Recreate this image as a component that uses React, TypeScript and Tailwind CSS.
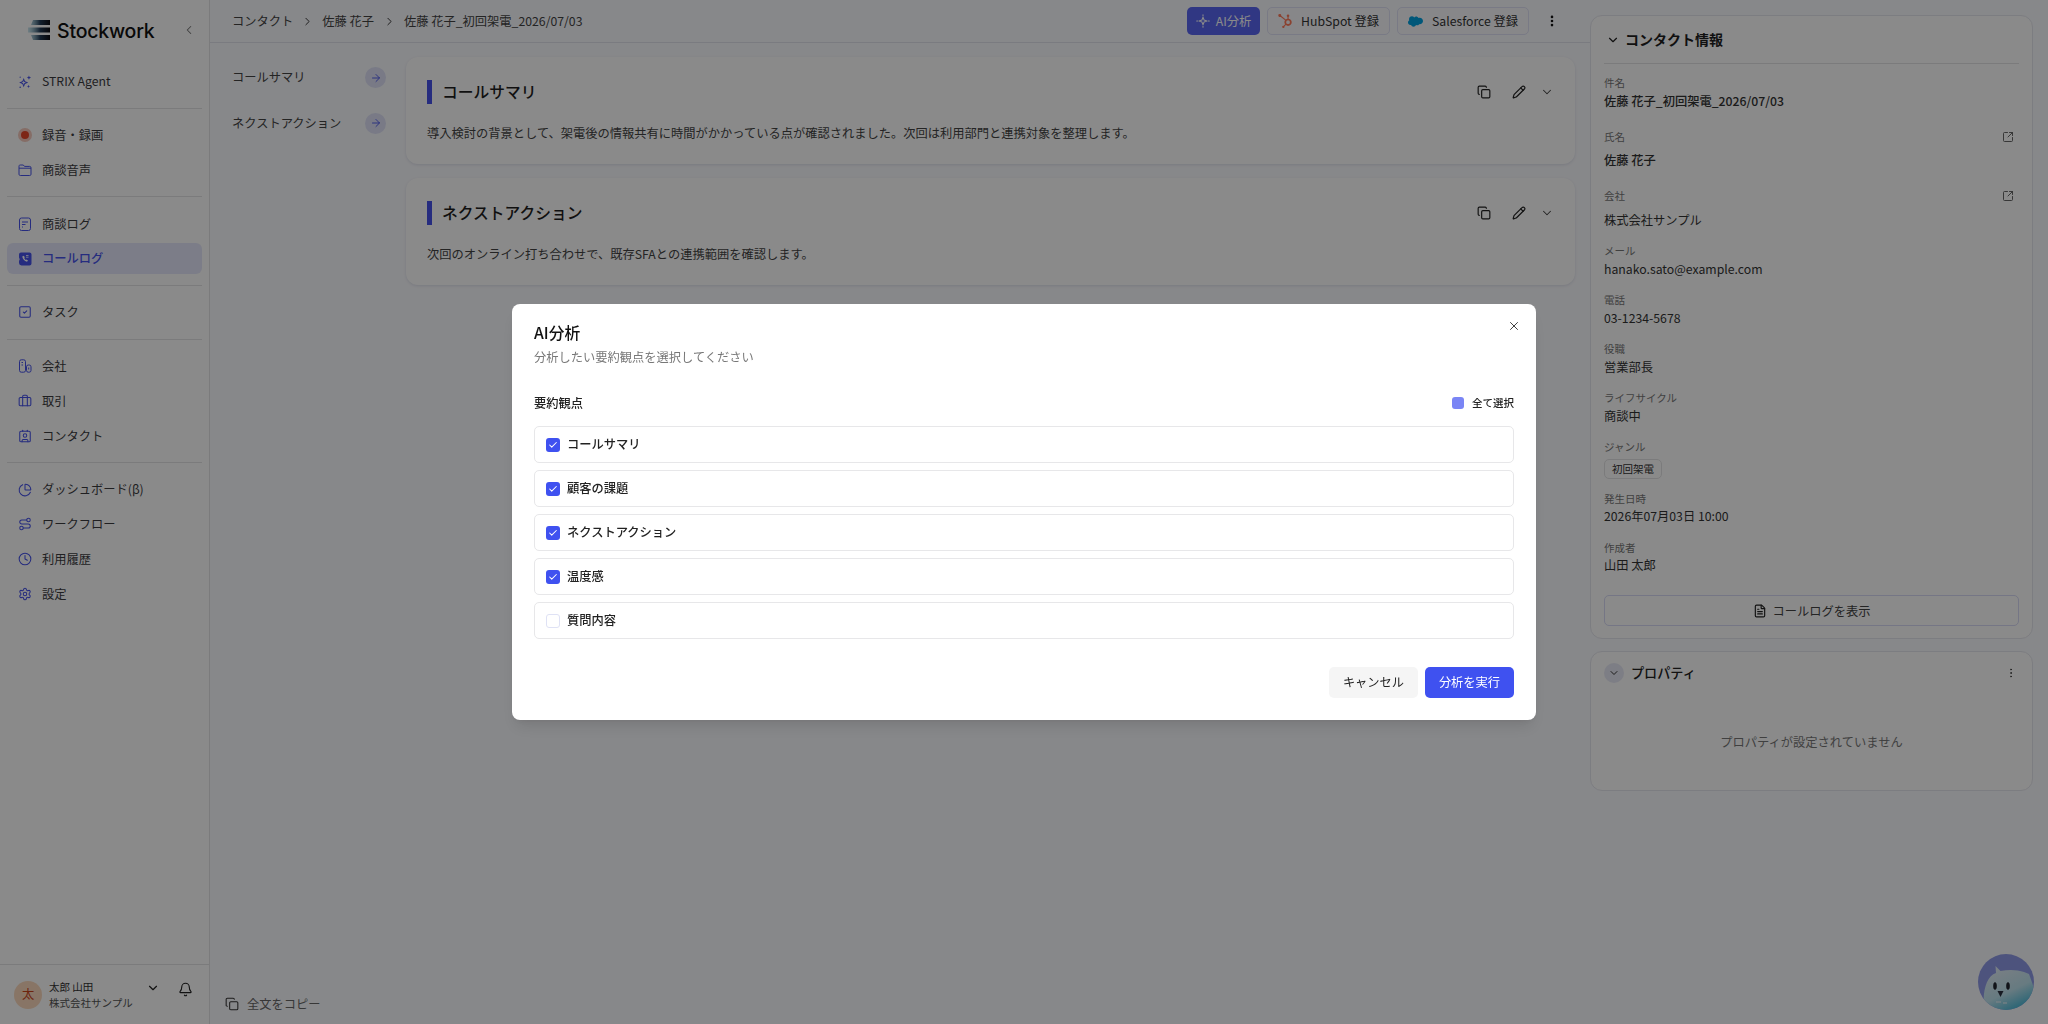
import type { ReactNode } from 'react'
import clsx from 'clsx'
import {
  ArrowRight, Bell, Briefcase, ChartPie, Check, ChevronDown, ChevronLeft, ChevronRight, Clock,
  Contact, Copy, EllipsisVertical, FileText, Pencil, Route, Settings, SquareArrowOutUpRight, SquareCheck, X,
} from 'lucide-react'
import { SiHubspot, SiSalesforce } from 'react-icons/si'

const fontCls = "font-['Noto_Sans_CJK_JP','Noto_Sans',sans-serif]"
const dividerCls = 'h-px bg-[#e4e4e6]'

function AgentStars({ className }: { className?: string }) {
  return (
    <svg viewBox="0 0 16 16" className={className} fill="currentColor">
      <path d="M6.500 3.500 8 7.200l3.700 1.500L8 10.200l-1.500 3.700L5 10.200 1.300 8.700 5 7.200zM6.500 6.200l-.6 1.900-1.900.6 1.900.6.6 1.900.6-1.900 1.900-.6-1.900-.6z" fillRule="evenodd" />
      <path d="M12.500.5l.7 1.800 1.800.7-1.800.7-.7 1.800-.7-1.800-1.800-.7 1.800-.7z" />
      <path d="M12 11l.5 1.500 1.500.5-1.500.5-.5 1.500-.5-1.500-1.500-.5 1.500-.5z" />
      <circle cx="2.500" cy="14" r=".9" />
      <circle cx="2.500" cy="2.500" r=".7" />
    </svg>
  )
}

function AiStar({ className }: { className?: string }) {
  return (
    <svg viewBox="0 0 16 16" className={className} fill="none" stroke="currentColor" strokeWidth="1.200" strokeLinejoin="round">
      <path d="M8 3.500 9.200 6.800 12.500 8 9.200 9.200 8 12.500 6.800 9.200 3.500 8 6.800 6.800z" />
      <path d="M8 .8v1.200M8 14v1.200M.8 8H2M14 8h1.200" strokeLinecap="round" />
    </svg>
  )
}

function RecDot() {
  return (
    <span className="flex h-[14px] w-[14px] items-center justify-center rounded-full bg-[#f6c9bd]">
      <span className="h-[8px] w-[8px] rounded-full bg-[#e8482a]" />
    </span>
  )
}

function FolderIcon() {
  return (
    <svg viewBox="0 0 14 14" className="h-[14px] w-[14px]" fill="none" stroke="currentColor" strokeWidth="1">
      <path d="M1 3.200C1 2.300 1.600 2 2.300 2h3l1.200 1.400h5.200c.8 0 1.300.5 1.300 1.300v6.600c0 .8-.5 1.200-1.300 1.200H2.300C1.500 12.500 1 12 1 11.300z" />
      <path d="M1 5.200h12" />
    </svg>
  )
}

function LogIcon() {
  return (
    <svg viewBox="0 0 14 14" className="h-[14px] w-[14px]" fill="none" stroke="currentColor" strokeWidth="1">
      <rect x="1.500" y="1" width="11" height="12.500" rx="2" />
      <path d="M4 5h6M4 7.500h3.500M4 10h1" />
    </svg>
  )
}

function CallLogIcon() {
  return (
    <svg viewBox="0 0 14 14" className="h-[14px] w-[14px]" fill="currentColor">
      <path d="M3 .6h8.500a2 2 0 0 1 2 2v8.800a2 2 0 0 1-2 2H3.500A2.500 2.500 0 0 1 1 11V9l.7-1.800L1 5.500V2.600a2 2 0 0 1 2-2z" />
      <path d="M4.200 4.500c.6 2.700 2 4.300 4.800 5.200l1-1.300-1.600-1-.7.500c-.7-.4-1.200-1-1.500-1.800l.6-.6-.9-1.800z" fill="#fff" />
      <path d="M8 3.500h2.500M8 5.200h2.500" stroke="#fff" strokeWidth=".8" />
    </svg>
  )
}

function CompanyIcon() {
  return (
    <svg viewBox="0 0 14 14" className="h-[14px] w-[14px]" fill="none" stroke="currentColor" strokeWidth="1">
      <rect x="1.500" y=".8" width="6" height="12.400" rx="1.800" />
      <rect x="8.500" y="6" width="4.500" height="7.200" rx="1.800" />
      <path d="M3.500 3.500h1.500M3.500 6h1.500M10.700 8.500v2" />
    </svg>
  )
}

type NavEntry = { label: string; icon: ReactNode; active?: boolean }

const navIcon = 'h-[14px] w-[14px]'
const navGroups: NavEntry[][] = [
  [{ label: 'STRIX Agent', icon: <AgentStars className={navIcon} /> }],
  [
    { label: '録音・録画', icon: <RecDot /> },
    { label: '商談音声', icon: <FolderIcon /> },
  ],
  [
    { label: '商談ログ', icon: <LogIcon /> },
    { label: 'コールログ', icon: <CallLogIcon />, active: true },
  ],
  [{ label: 'タスク', icon: <SquareCheck className={navIcon} strokeWidth={1.800} /> }],
  [
    { label: '会社', icon: <CompanyIcon /> },
    { label: '取引', icon: <Briefcase className={navIcon} strokeWidth={1.800} /> },
    { label: 'コンタクト', icon: <Contact className={navIcon} strokeWidth={1.800} /> },
  ],
  [
    { label: 'ダッシュボード(β)', icon: <ChartPie className={navIcon} strokeWidth={1.800} /> },
    { label: 'ワークフロー', icon: <Route className={navIcon} strokeWidth={1.800} /> },
    { label: '利用履歴', icon: <Clock className={navIcon} strokeWidth={1.800} /> },
    { label: '設定', icon: <Settings className={navIcon} strokeWidth={1.800} /> },
  ],
]

function Sidebar() {
  return (
    <aside className="flex h-full w-[210px] shrink-0 flex-col border-r border-[#e4e4e6] bg-white">
      <div className="flex h-[66px] shrink-0 items-start pl-[27px] pr-[13px] pt-[19px]">
        <svg viewBox="0 0 24 22" className="h-[22px] w-[24px]">
          <defs>
            <linearGradient id="logo-bars" x1="0" x2="1">
              <stop offset="0" stopColor="#7fc4d8" stopOpacity=".4" />
              <stop offset=".55" stopColor="#223a55" />
              <stop offset="1" stopColor="#0d0d12" />
            </linearGradient>
          </defs>
          <path d="M6 1h17v5H4z M1 8.500h22v5H1z M4 16h19v5H6z" fill="url(#logo-bars)" />
        </svg>
        <span className="ml-[6px] font-['Inter',sans-serif] text-[19.500px] font-medium leading-[24px] tracking-[-0.2px] text-[#111]">Stockwork</span>
        <ChevronLeft className="ml-auto mt-[4px] h-[14px] w-[14px] text-[#777]" strokeWidth={1.800} />
      </div>

      <nav>
        {navGroups.map((group, i) => (
          <div key={i}>
            {i > 0 && <div className={clsx(dividerCls, 'mx-[7px] my-[10.900px] w-[195px]')} />}
            <div className="flex flex-col gap-[3.800px]">
              {group.map((item) => (
                <div
                  key={item.label}
                  className={clsx(
                    'mx-[7px] flex h-[31px] w-[195px] items-center gap-[10px] rounded-[6px] pl-[11px] text-[12.250px]',
                    item.active ? 'bg-[#e6e8fb] font-medium text-[#4652ea]' : 'text-[#3c3c3f]',
                  )}
                >
                  <span className="flex h-[14px] w-[14px] items-center justify-center text-[#4652ea]">{item.icon}</span>
                  {item.label}
                </div>
              ))}
            </div>
          </div>
        ))}
      </nav>

      <div className="mt-auto flex h-[60px] shrink-0 items-center border-t border-[#e4e4e6] pl-[14px]">
        <span className="flex h-[28px] w-[28px] items-center justify-center rounded-full bg-[#fbd9bd] text-[12.250px] text-[#c9441a]">太</span>
        <div className="ml-[7px] w-[90px]">
          <div className="text-[10.500px] leading-[16px] text-[#333]">太郎 山田</div>
          <div className="whitespace-nowrap text-[10.500px] leading-[16px] text-[#555]">株式会社サンプル</div>
        </div>
        <ChevronDown className="mb-[14px] ml-[7px] h-[14px] w-[14px] text-[#222]" strokeWidth={2} />
        <Bell className="mb-[10px] ml-[18px] h-[15px] w-[15px] text-[#222]" strokeWidth={1.800} />
      </div>
    </aside>
  )
}

function SummaryCard({ title, body }: { title: string; body: string }) {
  return (
    <section className="h-[107px] rounded-[12px] bg-white pl-[21px] pr-[19px] pt-[22.500px] shadow-[0_1px_3px_rgba(30,40,90,0.12)]">
      <div className="flex h-[24px] items-center">
        <span className="h-[24px] w-[5px] bg-[#4652ea]" />
        <h2 className="ml-[10px] text-[15.750px] font-medium text-[#1f1f1f]">{title}</h2>
        <Copy className="ml-auto h-[14px] w-[14px] text-[#222]" strokeWidth={2} />
        <Pencil className="ml-[21px] h-[14px] w-[14px] text-[#222]" strokeWidth={2} />
        <ChevronDown className="ml-[14px] mr-[2px] h-[14px] w-[14px] text-[#444]" strokeWidth={1.800} />
      </div>
      <p className="mt-[19px] text-[12.250px] leading-[20px] text-[#444]">{body}</p>
    </section>
  )
}

function HeaderButton({ icon, label, width }: { icon: ReactNode; label: string; width: string }) {
  return (
    <div className={clsx('flex h-[28px] items-center justify-center gap-[9px] rounded-[5px] border border-[#dfe1f5] bg-[#fafafe] text-[12.250px] text-[#333]', width)}>
      {icon}
      {label}
    </div>
  )
}

function Main() {
  return (
    <main className="flex h-full w-[1380px] shrink-0 flex-col">
      <header className="flex h-[43px] shrink-0 items-center border-b border-[#e2e4ec] pl-[22px] pr-[31px] text-[12.250px] text-[#444]">
        <span>コンタクト</span>
        <ChevronRight className="mx-[8px] h-[13px] w-[13px] text-[#333]" strokeWidth={1.800} />
        <span>佐藤 花子</span>
        <ChevronRight className="mx-[8.500px] h-[13px] w-[13px] text-[#333]" strokeWidth={1.800} />
        <span>佐藤 花子_初回架電_2026/07/03</span>
        <div className="ml-auto flex items-center gap-[7px]">
          <div className="flex h-[28px] w-[73px] items-center justify-center gap-[6px] rounded-[5px] bg-[#5a66f2] text-[12.250px] text-white">
            <AiStar className="h-[14px] w-[14px]" />
            AI分析
          </div>
          <HeaderButton width="w-[123px]" icon={<SiHubspot className="h-[14px] w-[14px] text-[#ff7a59]" />} label="HubSpot 登録" />
          <HeaderButton width="w-[132px]" icon={<SiSalesforce className="h-[15px] w-[15px] text-[#00a1e0]" />} label="Salesforce 登録" />
          <EllipsisVertical className="ml-[9px] h-[14px] w-[14px] text-[#111]" strokeWidth={2.500} />
        </div>
      </header>

      <div className="flex min-h-0 flex-1">
        <div className="w-[196px] shrink-0 pl-[22px] pr-[20px] pt-[24px]">
          {['コールサマリ', 'ネクストアクション'].map((label) => (
            <div key={label} className="mb-[24.500px] flex h-[21px] items-center justify-between text-[12.250px] text-[#444]">
              {label}
              <span className="flex h-[21px] w-[21px] items-center justify-center rounded-full bg-[#dfe2f8]">
                <ArrowRight className="h-[12px] w-[12px] text-[#4652ea]" strokeWidth={1.800} />
              </span>
            </div>
          ))}
        </div>
        <div className="flex flex-1 flex-col gap-[14px] pr-[15px] pt-[14px]">
          <SummaryCard title="コールサマリ" body="導入検討の背景として、架電後の情報共有に時間がかかっている点が確認されました。次回は利用部門と連携対象を整理します。" />
          <SummaryCard title="ネクストアクション" body="次回のオンライン打ち合わせで、既存SFAとの連携範囲を確認します。" />
        </div>
      </div>

      <div className="flex shrink-0 items-center gap-[8px] pb-[11px] pl-[15px] text-[12.250px] text-[#666]">
        <Copy className="h-[14px] w-[14px] text-[#333]" strokeWidth={1.800} />
        全文をコピー
      </div>
    </main>
  )
}

function Field({ label, value, link, strong }: { label: string; value: string; link?: boolean; strong?: boolean }) {
  return (
    <div className="mb-[14.500px]">
      <div className={clsx('flex items-center justify-between text-[10.500px] text-[#777]', link ? 'h-[25px]' : 'h-[15px]')}>
        {label}
        {link && <SquareArrowOutUpRight className="mr-[5px] h-[12px] w-[12px] text-[#555]" strokeWidth={1.800} />}
      </div>
      <div className={clsx('h-[18px] text-[12.250px] leading-[18px] text-[#333]', link ? 'mt-[2px]' : 'mt-[1.500px]', strong && 'font-medium')}>{value}</div>
    </div>
  )
}

function RightPanel() {
  return (
    <div className="flex w-[458px] shrink-0 flex-col gap-[12px] pr-[15px] pt-[15px]">
      <section className="rounded-[12px] border border-[#e6e7ee] bg-white px-[13px] pb-[12px]">
        <div className="mb-[11px] flex h-[48px] items-center gap-[5px] border-b border-[#e4e4e6] pl-[2px]">
          <ChevronDown className="h-[14px] w-[14px] text-[#222]" strokeWidth={2} />
          <h3 className="text-[14px] font-semibold text-[#1f1f1f]">コンタクト情報</h3>
        </div>
        <Field label="件名" value="佐藤 花子_初回架電_2026/07/03" strong />
        <Field label="氏名" value="佐藤 花子" link strong />
        <Field label="会社" value="株式会社サンプル" link />
        <Field label="メール" value="hanako.sato@example.com" />
        <Field label="電話" value="03-1234-5678" />
        <Field label="役職" value="営業部長" />
        <Field label="ライフサイクル" value="商談中" />
        <div className="mb-[12px]">
          <div className="h-[15px] text-[10.500px] text-[#777]">ジャンル</div>
          <span className="mt-[1.500px] inline-flex h-[20px] w-[58px] items-center justify-center rounded-[5px] border border-[#e4e4e6] text-[10.500px] text-[#333]">初回架電</span>
        </div>
        <Field label="発生日時" value="2026年07月03日 10:00" />
        <Field label="作成者" value="山田 太郎" />
        <div className="mt-[21px] flex h-[31px] items-center justify-center gap-[6px] rounded-[5px] border border-[#d8daf5] text-[12.250px] text-[#444]">
          <FileText className="h-[14px] w-[14px] text-[#222]" strokeWidth={2} />
          コールログを表示
        </div>
      </section>

      <section className="h-[140px] rounded-[12px] border border-[#e6e7ee] bg-white px-[13px]">
        <div className="flex h-[41px] items-center">
          <span className="flex h-[20px] w-[20px] items-center justify-center rounded-full bg-[#e8e9f6]">
            <ChevronDown className="h-[12px] w-[12px] text-[#333]" strokeWidth={2} />
          </span>
          <h3 className="ml-[7px] text-[13.125px] font-medium text-[#222]">プロパティ</h3>
          <EllipsisVertical className="ml-auto mr-[2px] h-[12px] w-[12px] text-[#444]" strokeWidth={2} />
        </div>
        <p className="mt-[40px] text-center text-[12.250px] text-[#777]">プロパティが設定されていません</p>
      </section>
    </div>
  )
}

function Owl() {
  return (
    <svg viewBox="0 0 56 56" className="absolute bottom-[14px] right-[14px] h-[56px] w-[56px]">
      <defs>
        <linearGradient id="owl-body" x1="0.200" y1="0" x2="0.700" y2="1">
          <stop offset="0" stopColor="#e4ecf6" />
          <stop offset=".55" stopColor="#bfe3ee" />
          <stop offset="1" stopColor="#2aaed2" />
        </linearGradient>
        <clipPath id="owl-clip"><circle cx="28" cy="28" r="28" /></clipPath>
      </defs>
      <circle cx="28" cy="28" r="28" fill="#8f9ae8" />
      <g clipPath="url(#owl-clip)">
        <path d="M7 60C3 40 8 22 18 19L17.500 12l5 5C32 15 40 16 46 18l5 2 5 14v26z" fill="url(#owl-body)" />
        <ellipse cx="17" cy="32" rx="1.800" ry="3.800" fill="#20242f" />
        <ellipse cx="30" cy="32" rx="1.800" ry="3.800" fill="#20242f" />
        <path d="M19.500 37h6l-3 6z" fill="#2b3140" />
        <path d="M18 48h5M25 49h4" stroke="#eef6fa" strokeWidth="1" />
      </g>
    </svg>
  )
}

const viewpoints = [
  { label: 'コールサマリ', checked: true },
  { label: '顧客の課題', checked: true },
  { label: 'ネクストアクション', checked: true },
  { label: '温度感', checked: true },
  { label: '質問内容', checked: false },
]

function AnalysisDialog() {
  return (
    <div className="absolute inset-0 flex items-center justify-center bg-black/[0.46] backdrop-blur-[0.75px]">
      <div className="relative h-[416px] w-[1024px] rounded-[8px] bg-white px-[22px] pt-[17px] shadow-lg">
        <X className="absolute right-[15px] top-[15px] h-[14px] w-[14px] text-[#333]" strokeWidth={1.600} />
        <h2 className="text-[15.750px] font-medium leading-[24px] text-[#111]">AI分析</h2>
        <p className="mt-[2px] text-[12.250px] leading-[20px] text-[#777]">分析したい要約観点を選択してください</p>

        <div className="mt-[24px] flex h-[24px] items-center justify-between">
          <span className="text-[12.250px] font-medium text-[#222]">要約観点</span>
          <span className="flex items-center gap-[8px] text-[10.500px] font-medium text-[#222]">
            <span className="h-[12px] w-[12px] rounded-[3px] bg-[#7a85f5]" />
            全て選択
          </span>
        </div>

        <div className="mt-[11px] flex flex-col gap-[7px]">
          {viewpoints.map((v) => (
            <div key={v.label} className="flex h-[37px] items-center gap-[7px] rounded-[5px] border border-[#e7e7e9] pl-[11px] text-[12.250px] font-medium text-[#222]">
              <span className={clsx('flex h-[14px] w-[14px] items-center justify-center rounded-[3px]', v.checked ? 'bg-[#3f51f0]' : 'border border-[#dfe2f5]')}>
                {v.checked && <Check className="h-[10px] w-[10px] text-white" strokeWidth={2.500} />}
              </span>
              {v.label}
            </div>
          ))}
        </div>

        <div className="mt-[28px] flex justify-end gap-[7px]">
          <div className="flex h-[31px] w-[89px] items-center justify-center rounded-[5px] bg-[#f5f5f5] text-[12.250px] text-[#222]">キャンセル</div>
          <div className="flex h-[31px] w-[89px] items-center justify-center rounded-[5px] bg-[#3f51f0] text-[12.250px] text-white">分析を実行</div>
        </div>
      </div>
    </div>
  )
}

export default function App() {
  return (
    <div className={clsx('relative flex h-screen w-full overflow-hidden bg-[#fafbff]', fontCls)}>
      <Sidebar />
      <Main />
      <RightPanel />
      <Owl />
      <AnalysisDialog />
    </div>
  )
}
